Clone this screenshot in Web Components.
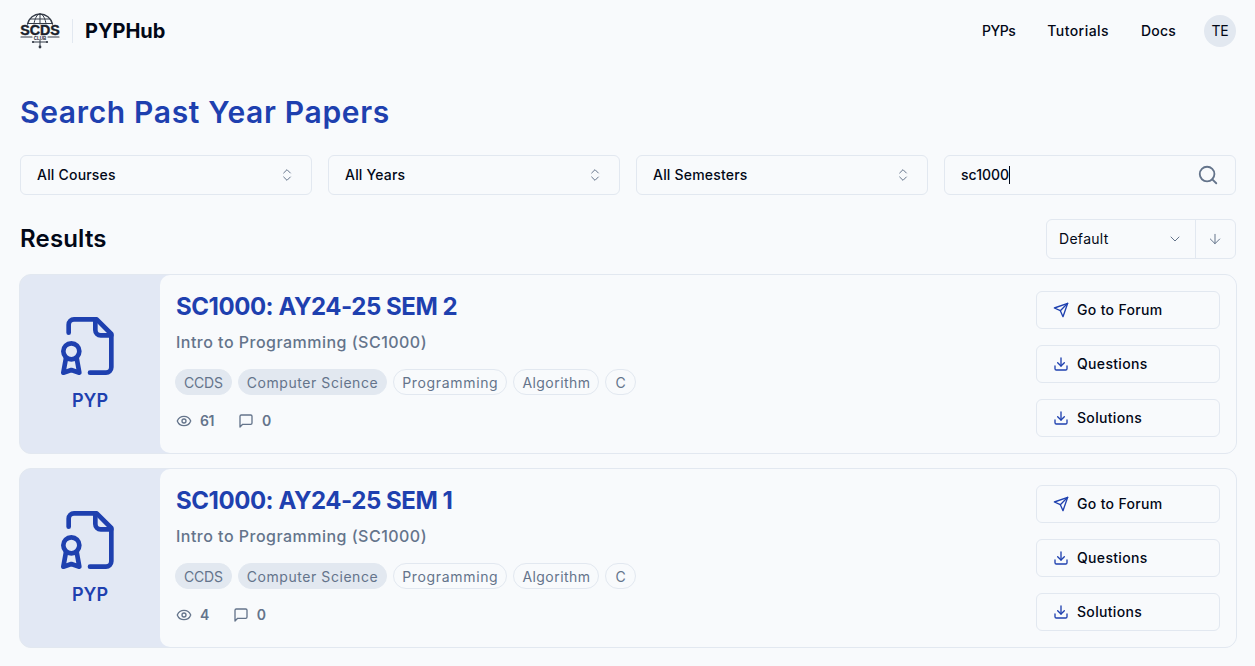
<!DOCTYPE html>
<html lang="en"><head><meta charset="utf-8"><title>PYPHub</title>
<style>
html,body{margin:0;background:#f8fafc;height:666px;overflow:hidden}
body{font-family:Inter,"Noto Sans",sans-serif;color:#020817}
</style></head><body>
<pyp-app></pyp-app>
<script>
const I={
 chev:'<path d="m7 15 5 5 5-5"/><path d="m7 9 5-5 5 5"/>',
 down:'<path d="m6 9 6 6 6-6"/>',
 arrow:'<path d="M12 5v14"/><path d="m19 12-7 7-7-7"/>',
 search:'<circle cx="11" cy="11" r="8"/><path d="m21 21-4.3-4.3"/>',
 eye:'<path d="M2.06 12.35a1 1 0 0 1 0-.7 10.75 10.75 0 0 1 19.88 0 1 1 0 0 1 0 .7 10.75 10.75 0 0 1-19.88 0"/><circle cx="12" cy="12" r="3"/>',
 msg:'<path d="M21 15a2 2 0 0 1-2 2H7l-4 4V5a2 2 0 0 1 2-2h14a2 2 0 0 1 2 2z"/>',
 send:'<path d="m22 2-7 20-4-9-9-4Z"/><path d="M22 2 11 13"/>',
 dl:'<path d="M21 15v4a2 2 0 0 1-2 2H5a2 2 0 0 1-2-2v-4"/><path d="m7 10 5 5 5-5"/><path d="M12 15V3"/>',
 file:'<path d="M4 7V4a2 2 0 0 1 2-2h8.5L20 7.5V20a2 2 0 0 1-2 2h-6"/><path d="M14 2v4a2 2 0 0 0 2 2h4"/><circle cx="5" cy="14" r="3"/><path d="M7 16.5 8 22l-3-1-3 1 1-5.5"/>'
};
const svg=(n,s,c,w=2)=>`<svg width="${s}" height="${s}" viewBox="0 0 24 24" fill="none" stroke="${c}" stroke-width="${w}" stroke-linecap="round" stroke-linejoin="round" style="display:block;flex:none">${I[n]}</svg>`;
function def(name,css,html){customElements.define(name,class extends HTMLElement{
 constructor(){super();this.attachShadow({mode:'open'})}
 connectedCallback(){const f=typeof html==='function'?html(this):html;this.shadowRoot.innerHTML=`<style>${css}</style>${f}`}
})}
def('scds-logo',`:host{display:block;width:40px;height:36px}svg{display:block}text{font-family:"Liberation Sans",sans-serif;font-weight:700;fill:#1a1f2b;text-anchor:middle}`,
`<svg width="40" height="36" viewBox="0 0 40 36" fill="none" stroke="#333a46" stroke-linecap="round">
<path d="M7.500 11C9 5 14 1 20 1S31 5 32.500 11" stroke-width="1.300"/>
<path d="M14 11c.5-5 3-10 6-10s5.500 5 6 10M20 1v10M10 6h20M8 10.500h24" stroke-width="1"/>
<path d="M1 24h11M28 24h11" stroke-width="1.100"/>
<path d="M20 27v7M13 29h14" stroke-width="1"/>
<circle cx="20" cy="34" r="1.400" fill="#333a46" stroke="none"/><circle cx="13" cy="29" r="1.100" fill="#333a46" stroke="none"/><circle cx="27" cy="29" r="1.100" fill="#333a46" stroke="none"/>
<text x="20" y="22" font-size="14.500" stroke="#1a1f2b" stroke-width=".4" textLength="39.500" lengthAdjust="spacingAndGlyphs">SCDS</text>
<text x="20" y="26.500" font-size="4.500" stroke="none">CLUB</text></svg>`);
def('app-nav',`:host{display:flex;align-items:center;height:62px;padding:0 19px 0 20px}
.brand{display:flex;align-items:center;flex:1}
.sep{width:1px;height:24px;background:#e2e8f0;margin:0 12px}
.t{font-weight:700;font-size:20px;letter-spacing:-.05px;color:#020817}
a{display:block;font-size:14px;font-weight:500;color:#020817;text-decoration:none;margin:0 0 2px 32px}
.av{width:32px;height:32px;border-radius:50%;background:#e2e8f0;display:flex;align-items:center;justify-content:center;font-size:14px;margin-left:28px;color:#020817}
.av span{display:block;margin-bottom:2px;letter-spacing:-.3px}`,
`<div class="brand"><scds-logo></scds-logo><div class="sep"></div><span class="t">PYPHub</span></div><a style="letter-spacing:-.5px">PYPs</a><a style="letter-spacing:.45px">Tutorials</a><a style="letter-spacing:.2px">Docs</a><div class="av"><span>TE</span></div>`);
def('filter-select',`:host{display:flex;align-items:center;justify-content:space-between;height:38px;padding:0 16px;border:1px solid #e2e8f0;border-radius:6px;background:#f8fafc;font-size:14px;font-weight:500;color:#020817}
span{display:block;margin-bottom:2px;letter-spacing:.2px}`,
e=>`<span>${e.getAttribute('label')}</span>${svg('chev',16,'#64748b',1.5)}`);
def('search-box',`:host{display:flex;align-items:center;height:38px;padding:0 16px;border:1px solid #e2e8f0;border-radius:6px;font-size:14px;font-weight:500;color:#020817}
.v{display:block;margin-bottom:2px}
.c{width:1px;height:18px;background:#020817}.g{flex:1}`,
`<span class="v">sc1000</span><span class="c"></span><span class="g"></span>${svg('search',22,'#64748b')}`);
def('sort-control',`:host{display:flex;height:38px;border:1px solid #e2e8f0;border-radius:6px;width:188px;font-size:14px;color:#020817}
.a{flex:1;display:flex;align-items:center;justify-content:space-between;padding:0 12px;border-right:1px solid #e2e8f0}
.a span{display:block;margin-bottom:2px;letter-spacing:.3px}
.b{width:39px;display:flex;align-items:center;justify-content:center;padding-right:1px;box-sizing:border-box}`,
`<div class="a"><span>Default</span>${svg('down',16,'#64748b',1.5)}</div><div class="b">${svg('arrow',16,'#64748b',1.5)}</div>`);
def('tag-pill',`:host{display:inline-flex;align-items:center;height:24px;padding:0 8px;border-radius:13px;border:1px solid #e2e8f0;font-size:14px;color:#64748b;white-space:nowrap}
:host([solid]){background:#e2e8f0;border-color:#e2e8f0}`,`<slot></slot>`);
def('action-button',`:host{display:flex;align-items:center;gap:8px;height:36px;padding:0 16px;border:1px solid #e2e8f0;border-radius:6px;font-size:14px;font-weight:500;color:#020817}
span{display:block;margin-bottom:2px;letter-spacing:.33px}`,
e=>`${svg(e.getAttribute('icon'),16,'#1e40af')}<span><slot></slot></span>`);
def('paper-card',`:host{display:flex;height:178px;margin:0 -1px;border:1px solid #e2e8f0;border-radius:12px;background:#e2e8f4;overflow:hidden}
.l{width:140px;flex:none;display:flex;flex-direction:column;align-items:center;justify-content:center;color:#1e40af;font-weight:600;font-size:18px;gap:12px;padding-bottom:4px;box-sizing:border-box}
.m{flex:1;min-width:0;background:#f8fafc;border-radius:10px 0 0 10px;display:flex;padding:16px;box-sizing:border-box;justify-content:space-between}
.i{display:flex;flex-direction:column;align-items:flex-start}
h2{margin:0;font-size:24px;line-height:32px;font-weight:700;color:#1e40af;letter-spacing:-.46px}
.s{font-size:16px;font-weight:500;color:#64748b;line-height:24px;margin-top:7px;letter-spacing:.48px}
.tags{display:flex;gap:6px;margin:15px 0 0 -1px}
.st{display:flex;align-items:center;font-size:14px;font-weight:600;color:#64748b;margin-top:16px;line-height:20px;letter-spacing:-.5px}
.st svg{margin-right:8px}.st span{margin-right:24px}
.act{display:flex;flex-direction:column;gap:16px;width:184px}`,
e=>`<div class="l">${svg('file',64,'#1e40af',1.75)}<span>PYP</span></div>
<div class="m"><div class="i"><h2>${e.getAttribute('title')}</h2><div class="s">Intro to Programming (SC1000)</div>
<div class="tags"><tag-pill solid style="letter-spacing:-.2px">CCDS</tag-pill><tag-pill solid style="letter-spacing:.56px">Computer Science</tag-pill><tag-pill style="letter-spacing:.66px">Programming</tag-pill><tag-pill style="letter-spacing:.45px">Algorithm</tag-pill><tag-pill style="padding:0 9px">C</tag-pill></div>
<div class="st">${svg('eye',16,'#64748b')}<span>${e.getAttribute('views')}</span>${svg('msg',16,'#64748b')}<span>0</span></div></div>
<div class="act"><action-button icon="send">Go to Forum</action-button><action-button icon="dl">Questions</action-button><action-button icon="dl">Solutions</action-button></div></div>`);
def('pyp-app',`:host{display:block}
main{padding:0 19px 0 20px}
h1{margin:30px 0 0;font-size:30px;line-height:40px;font-weight:600;color:#1e40af;letter-spacing:.66px}
.f{display:grid;grid-template-columns:repeat(4,1fr);gap:16px;margin-top:23px}
.r{display:flex;align-items:center;justify-content:space-between;margin-top:24px}
h3{margin:0 0 2px;font-size:24px;font-weight:600;letter-spacing:.17px}
.c{display:flex;flex-direction:column;gap:14px;margin-top:15px}`,
`<app-nav></app-nav><main><h1>Search Past Year Papers</h1>
<div class="f"><filter-select label="All Courses"></filter-select><filter-select label="All Years"></filter-select><filter-select label="All Semesters"></filter-select><search-box></search-box></div>
<div class="r"><h3>Results</h3><sort-control></sort-control></div>
<div class="c"><paper-card title="SC1000: AY24-25 SEM 2" views="61"></paper-card><paper-card title="SC1000: AY24-25 SEM 1" views="4"></paper-card></div></main>`);
</script></body></html>
